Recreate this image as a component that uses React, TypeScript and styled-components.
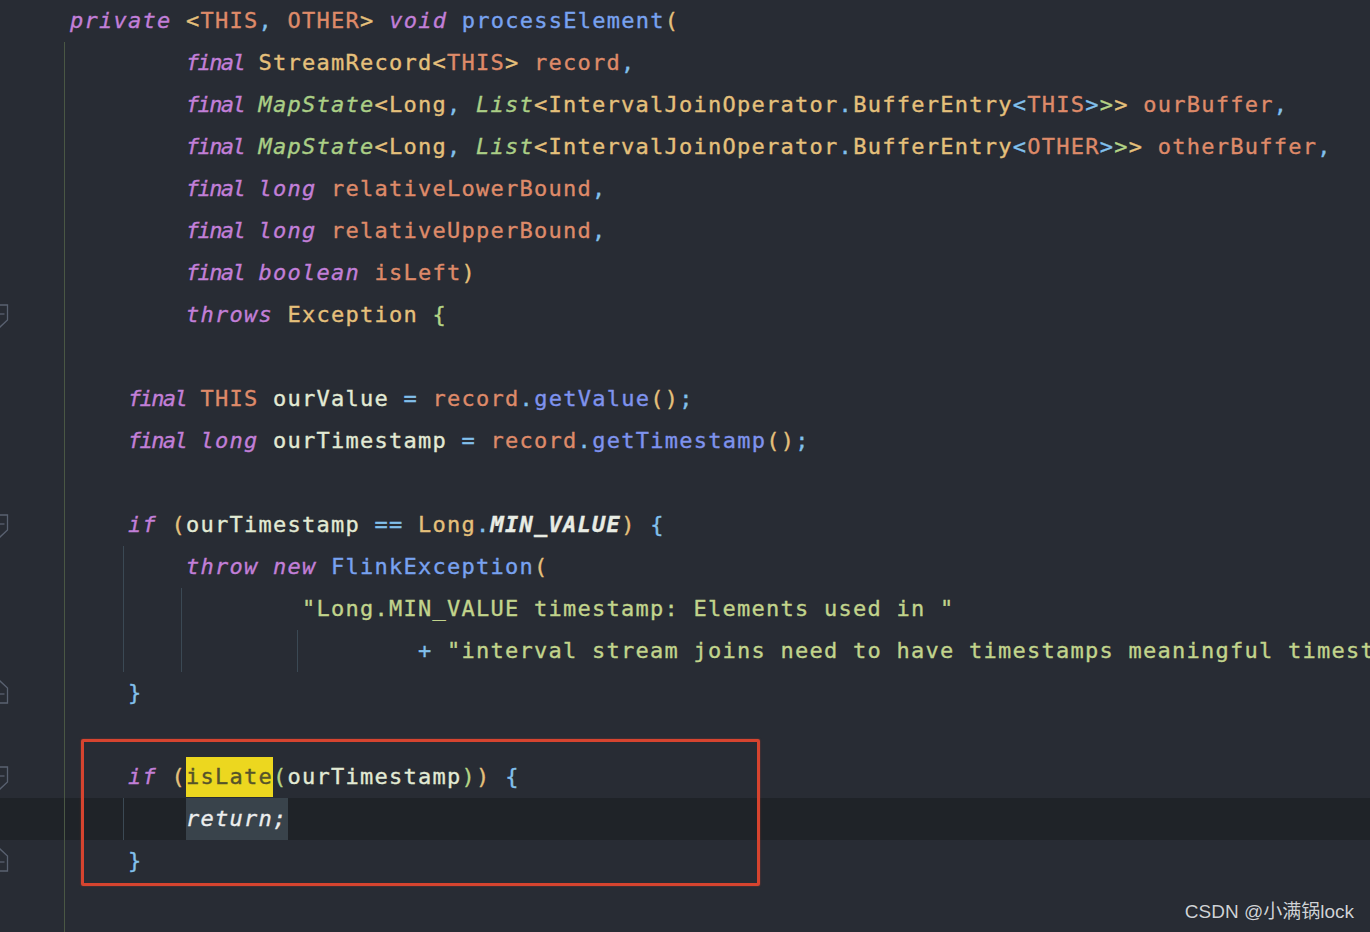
import React from 'react'
import styled, { createGlobalStyle } from 'styled-components'

const GlobalStyle = createGlobalStyle`
  html, body {
    margin: 0;
    padding: 0;
    background: #282c34;
    overflow: hidden;
  }
`

type Kind =
  | 'plain'
  | 'kw'
  | 'final'
  | 'type'
  | 'param'
  | 'iface'
  | 'fn'
  | 'method'
  | 'punct'
  | 'local'
  | 'str'
  | 'const'
  | 'green'
  | 'mark'
  | 'ret'

const palette: Record<Kind, string> = {
  plain: '#d6dde6',
  kw: '#c27fd8',
  final: '#c27fd8',
  type: '#e5c07b',
  param: '#de8a69',
  iface: '#abcf86',
  fn: '#78a2f0',
  method: '#7f93ee',
  punct: '#82c0ec',
  local: '#e2ead4',
  str: '#c2d48c',
  const: '#e8ece4',
  green: '#b4d486',
  mark: '#55532a',
  ret: '#eceeee',
}

const italicKinds: Kind[] = ['kw', 'final', 'iface', 'const', 'ret']

type Token = [Kind, string]

type CodeLineData = {
  indent?: number
  guides?: number[]
  scope?: boolean
  fold?: 'open' | 'close'
  current?: boolean
  tokens: Token[]
}

const Editor = styled.div`
  position: relative;
  width: 1370px;
  height: 932px;
  overflow: hidden;
  background: #282c34;
`

const Row = styled.div<{ $current?: boolean }>`
  display: flex;
  height: 42px;
  background: ${({ $current }) => ($current ? '#1f2328' : 'transparent')};
`

const Gutter = styled.div`
  flex: none;
  width: 64px;
  display: flex;
  align-items: center;
`

const Code = styled.div<{ $scope?: boolean }>`
  flex: 1;
  border-left: 1px solid ${({ $scope }) => ($scope ? '#4a5744' : 'transparent')};
  padding-left: 5px;
  white-space: pre;
  font-family: 'DejaVu Sans Mono', 'Liberation Mono', monospace;
  font-size: 22px;
  letter-spacing: 1.255px;
  line-height: 42px;
  color: #d6dde6;
  -webkit-text-stroke: 0.35px currentColor;
`

const IndentStep = styled.span<{ $guide?: boolean }>`
  display: inline-block;
  width: 58px;
  height: 42px;
  vertical-align: top;
  background: ${({ $guide }) =>
    $guide
      ? 'linear-gradient(to right, transparent 53px, #3b4954 53px, #3b4954 54px, transparent 54px)'
      : 'none'};
`

const Tok = styled.span<{ $kind: Kind }>`
  color: ${({ $kind }) => palette[$kind]};
  font-style: ${({ $kind }) => (italicKinds.includes($kind) ? 'italic' : 'normal')};
  font-weight: ${({ $kind }) => ($kind === 'const' ? 700 : 400)};
  ${({ $kind }) => ($kind === 'final' ? 'letter-spacing: -1.645px;' : '')}
  ${({ $kind }) =>
    $kind === 'mark'
      ? `display: inline-block; line-height: 40px; background: #ecd71f;`
      : ''}
  ${({ $kind }) =>
    $kind === 'ret'
      ? `display: inline-block; line-height: 42px; background: #39434b;`
      : ''}
`

const Callout = styled.div`
  position: absolute;
  left: 81px;
  top: 739px;
  width: 679px;
  height: 147px;
  box-sizing: border-box;
  border: 3px solid #d6442f;
  border-radius: 2px;
  box-shadow: 0 0 2px rgba(214, 68, 47, 0.5);
  pointer-events: none;
`

const Watermark = styled.div`
  position: absolute;
  right: 16px;
  bottom: 9px;
  font-family: 'Liberation Sans', 'Noto Sans CJK SC', sans-serif;
  font-size: 19px;
  line-height: 22px;
  color: #cfd2d6;
  text-shadow: 0 0 1px rgba(0, 0, 0, 0.4);
`

const FoldMark = ({ dir }: { dir: 'open' | 'close' }) => (
  <svg width="10" height="26" viewBox="0 0 10 26">
    <path
      d={dir === 'open' ? 'M-8 3 H7.5 V18 L0 25 L-8 18' : 'M-8 23 H7.5 V8 L0 1 L-8 8'}
      fill="none"
      stroke="#596170"
      strokeWidth="1.3"
    />
    <path d={dir === 'open' ? 'M-3 12 H4.5' : 'M-3 14 H4.5'} stroke="#596170" strokeWidth="1.3" />
  </svg>
)

const sp: Token = ['plain', ' ']
const fin: Token = ['final', 'final']

const lines: CodeLineData[] = [
  {
    tokens: [
      ['kw', 'private'], sp, ['type', '<'], ['param', 'THIS'], ['punct', ', '],
      ['param', 'OTHER'], ['type', '>'], sp, ['kw', 'void'], sp,
      ['fn', 'processElement'], ['type', '('],
    ],
  },
  {
    indent: 2, scope: true,
    tokens: [
      fin, sp, ['type', 'StreamRecord<'], ['param', 'THIS'], ['type', '>'], sp,
      ['param', 'record'], ['punct', ','],
    ],
  },
  {
    indent: 2, scope: true,
    tokens: [
      fin, sp, ['iface', 'MapState'], ['type', '<Long'], ['punct', ', '], ['iface', 'List'],
      ['type', '<IntervalJoinOperator'], ['punct', '.'], ['type', 'BufferEntry'],
      ['punct', '<'], ['param', 'THIS'], ['punct', '>'], ['green', '>'], ['type', '>'], sp,
      ['param', 'ourBuffer'], ['punct', ','],
    ],
  },
  {
    indent: 2, scope: true,
    tokens: [
      fin, sp, ['iface', 'MapState'], ['type', '<Long'], ['punct', ', '], ['iface', 'List'],
      ['type', '<IntervalJoinOperator'], ['punct', '.'], ['type', 'BufferEntry'],
      ['punct', '<'], ['param', 'OTHER'], ['punct', '>'], ['green', '>'], ['type', '>'], sp,
      ['param', 'otherBuffer'], ['punct', ','],
    ],
  },
  {
    indent: 2, scope: true,
    tokens: [fin, sp, ['kw', 'long'], sp, ['param', 'relativeLowerBound'], ['punct', ',']],
  },
  {
    indent: 2, scope: true,
    tokens: [fin, sp, ['kw', 'long'], sp, ['param', 'relativeUpperBound'], ['punct', ',']],
  },
  {
    indent: 2, scope: true,
    tokens: [fin, sp, ['kw', 'boolean'], sp, ['param', 'isLeft'], ['type', ')']],
  },
  {
    indent: 2, scope: true, fold: 'open',
    tokens: [['kw', 'throws'], sp, ['type', 'Exception'], sp, ['green', '{']],
  },
  { scope: true, tokens: [] },
  {
    indent: 1, scope: true,
    tokens: [
      fin, sp, ['param', 'THIS'], sp, ['local', 'ourValue'], ['punct', ' = '],
      ['param', 'record'], ['punct', '.'], ['method', 'getValue'], ['type', '()'], ['punct', ';'],
    ],
  },
  {
    indent: 1, scope: true,
    tokens: [
      fin, sp, ['kw', 'long'], sp, ['local', 'ourTimestamp'], ['punct', ' = '],
      ['param', 'record'], ['punct', '.'], ['method', 'getTimestamp'], ['type', '()'], ['punct', ';'],
    ],
  },
  { scope: true, tokens: [] },
  {
    indent: 1, scope: true, fold: 'open',
    tokens: [
      ['kw', 'if'], sp, ['type', '('], ['local', 'ourTimestamp'], ['punct', ' == '],
      ['type', 'Long'], ['punct', '.'], ['const', 'MIN_VALUE'], ['type', ')'], sp, ['punct', '{'],
    ],
  },
  {
    indent: 2, guides: [0], scope: true,
    tokens: [['kw', 'throw'], sp, ['kw', 'new'], sp, ['fn', 'FlinkException'], ['type', '(']],
  },
  {
    indent: 4, guides: [0, 1], scope: true,
    tokens: [['str', '"Long.MIN_VALUE timestamp: Elements used in "']],
  },
  {
    indent: 6, guides: [0, 1, 3], scope: true,
    tokens: [
      ['punct', '+ '],
      ['str', '"interval stream joins need to have timestamps meaningful timestamps."'],
      ['type', ')'], ['punct', ';'],
    ],
  },
  { indent: 1, scope: true, fold: 'close', tokens: [['punct', '}']] },
  { scope: true, tokens: [] },
  {
    indent: 1, scope: true, fold: 'open',
    tokens: [
      ['kw', 'if'], sp, ['type', '('], ['mark', 'isLate'], ['green', '('],
      ['local', 'ourTimestamp'], ['green', ')'], ['type', ')'], sp, ['punct', '{'],
    ],
  },
  { indent: 2, guides: [0], scope: true, current: true, tokens: [['ret', 'return;']] },
  { indent: 1, scope: true, fold: 'close', tokens: [['punct', '}']] },
  { scope: true, tokens: [] },
  { scope: true, tokens: [] },
]

const CodeLine = ({ line }: { line: CodeLineData }) => {
  const steps = Array.from({ length: line.indent ?? 0 }, (_, i) => i)
  return (
    <Row $current={line.current}>
      <Gutter>{line.fold && <FoldMark dir={line.fold} />}</Gutter>
      <Code $scope={line.scope}>
        {steps.map((i) => (
          <IndentStep key={i} $guide={line.guides?.includes(i)} />
        ))}
        {line.tokens.map(([kind, text], i) => (
          <Tok key={i} $kind={kind}>
            {text}
          </Tok>
        ))}
      </Code>
    </Row>
  )
}

const App = () => {
  return (
    <>
      <GlobalStyle />
      <Editor>
        {lines.map((line, i) => (
          <CodeLine key={i} line={line} />
        ))}
        <Callout />
        <Watermark>CSDN @小满锅lock</Watermark>
      </Editor>
    </>
  )
}

export default App
